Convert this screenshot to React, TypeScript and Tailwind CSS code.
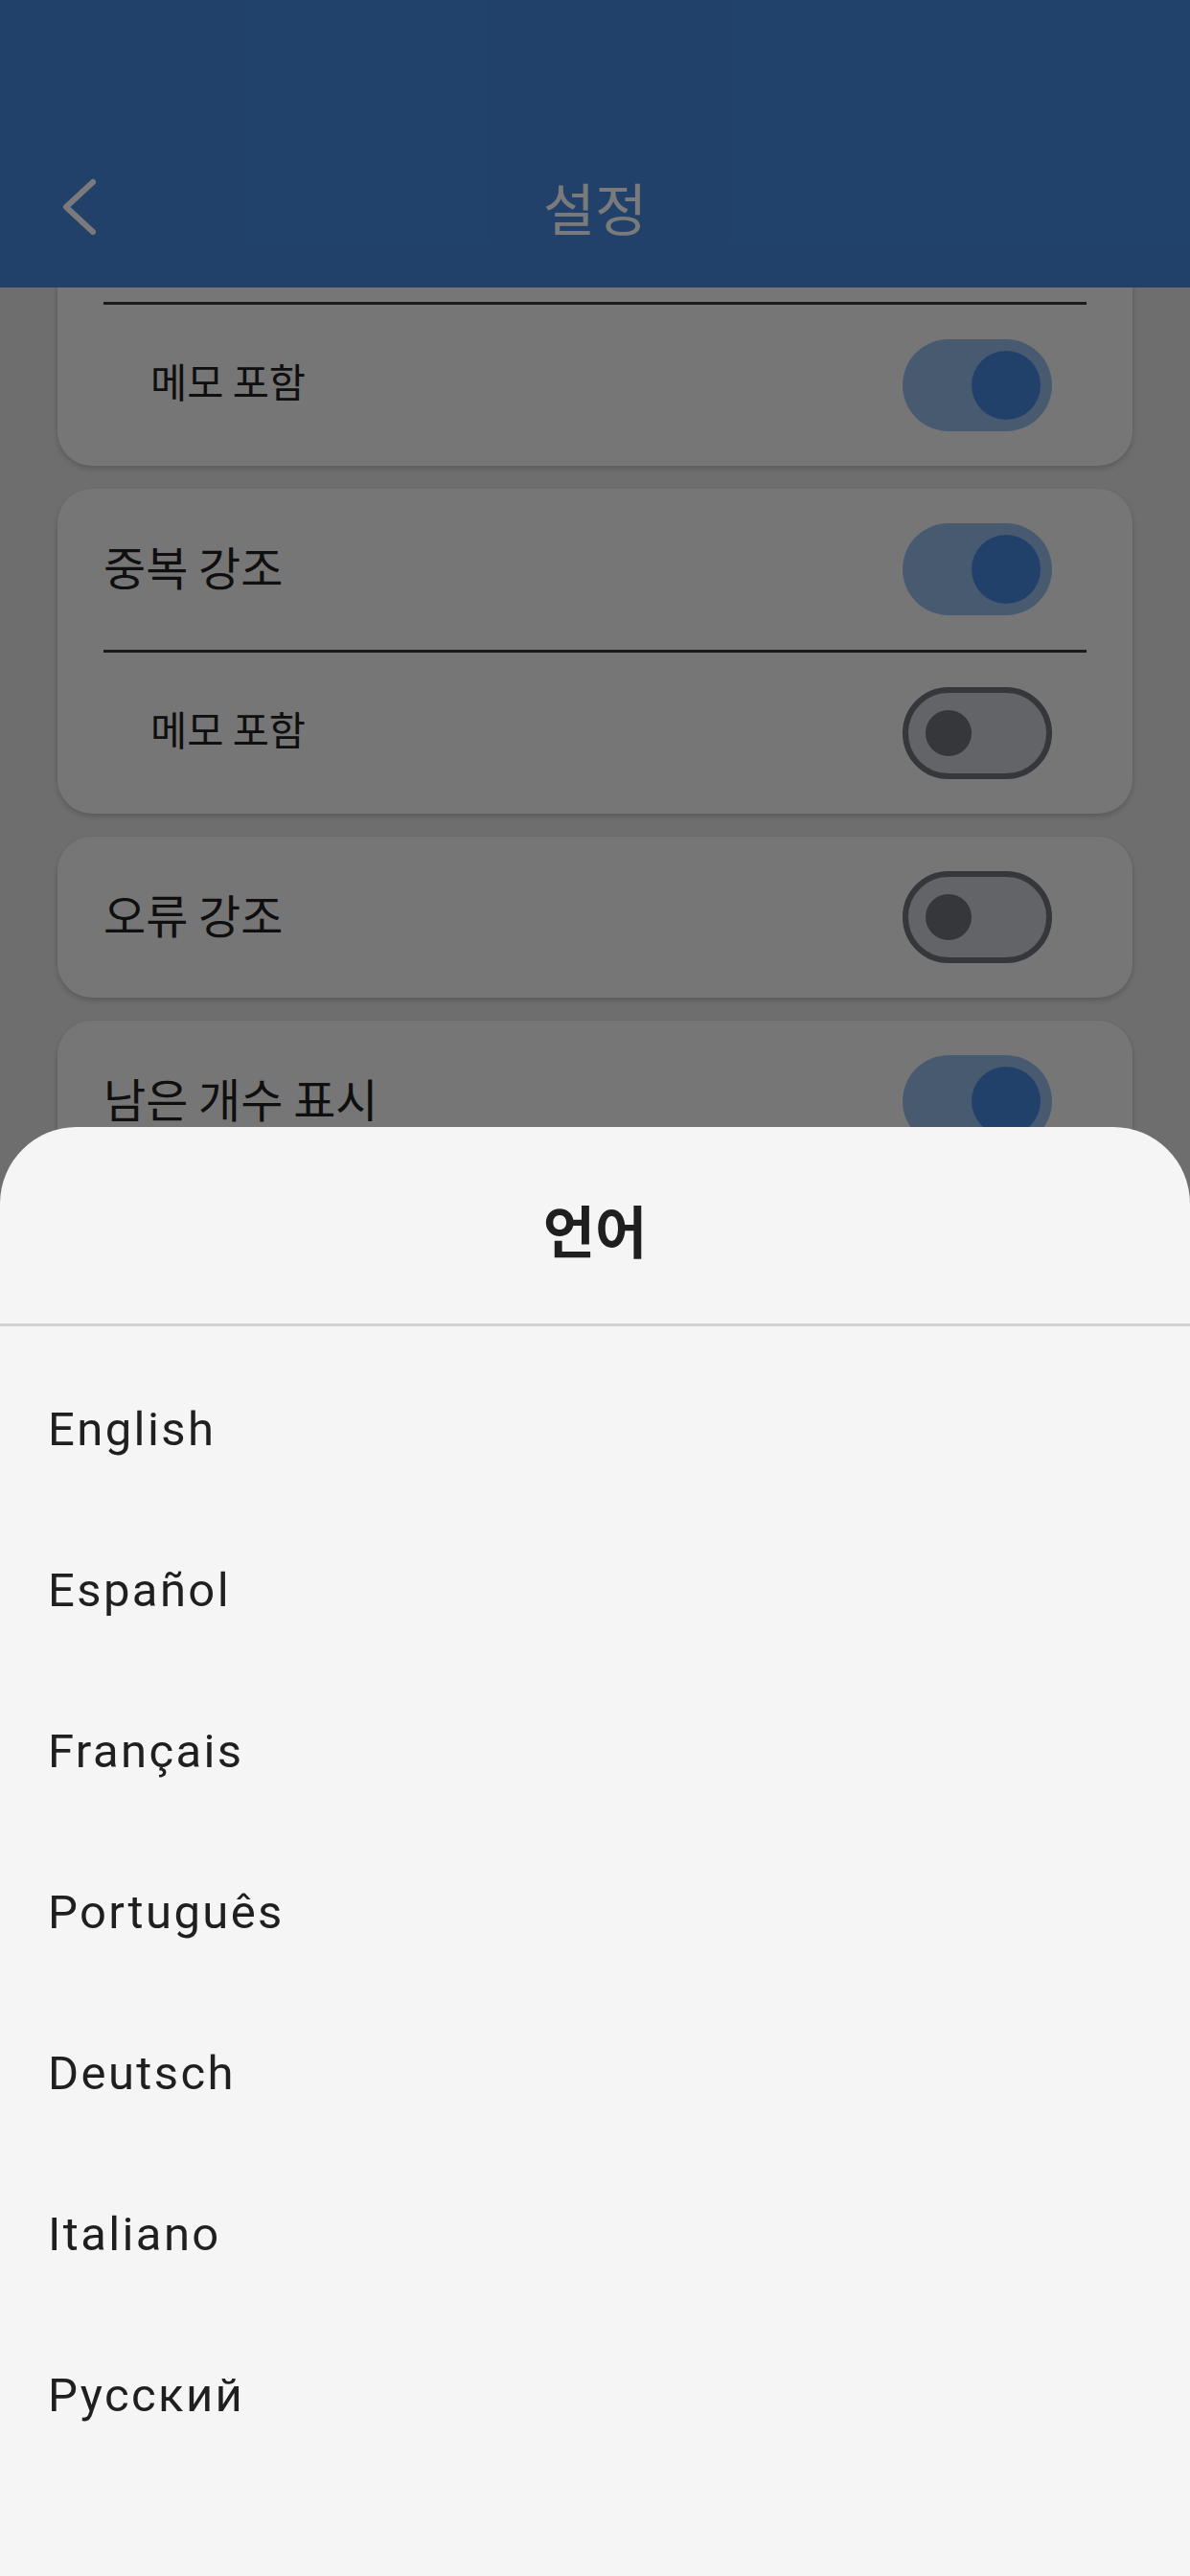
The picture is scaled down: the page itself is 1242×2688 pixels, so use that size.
import React from 'react';

const ko = { fontFamily: '"Noto Sans CJK KR", "Noto Sans", sans-serif' };
const latin = { fontFamily: 'Roboto, "Noto Sans", sans-serif' };

function Toggle({ on }: { on: boolean }) {
  if (on) {
    return (
      <div className="w-[156px] h-[96px] rounded-full bg-[#94bce9] flex items-center justify-end pr-[12px] shrink-0">
        <div className="w-[72px] h-[72px] rounded-full bg-[#4589dd]" />
      </div>
    );
  }
  return (
    <div className="w-[156px] h-[96px] rounded-full bg-[#ced2d9] border-[6px] border-[#717379] flex items-center pl-[18px] shrink-0">
      <div className="w-[48px] h-[48px] rounded-full bg-[#717379]" />
    </div>
  );
}

function Row({ label, on, sub }: { label: string; on: boolean; sub?: boolean }) {
  return (
    <div className={`h-[168px] flex items-center justify-between pr-[84px] ${sub ? 'pl-[97px]' : 'pl-[48px]'}`}>
      <span
        style={ko}
        className={`text-[#202020] leading-none pb-[8px] ${sub ? 'text-[41.5px]' : 'text-[48px]'}`}
      >
        {label}
      </span>
      <Toggle on={on} />
    </div>
  );
}

function Card({ children }: { children: React.ReactNode }) {
  return (
    <div className="bg-[#f6f6f6] rounded-[36px] shadow-[0_3px_6px_rgba(0,0,0,0.18)] flex flex-col">
      {children}
    </div>
  );
}

const Divider = () => <div className="mx-[48px] h-[3px] bg-[#3a3a3a]" />;

const languages = ['English', 'Español', 'Français', 'Português', 'Deutsch', 'Italiano', 'Русский'];

export default function App() {
  return (
    <div className="relative w-[1242px] h-[2688px] overflow-hidden bg-[#e6e6e6]">
      {/* app bar */}
      <div className="h-[300px] bg-[#4589dd] flex flex-col justify-end relative z-10">
        <div className="h-[168px] flex items-center">
          <div className="w-[150px] pl-[55px] flex items-center">
            <svg width="48" height="72" viewBox="0 0 48 72" fill="none">
              <path d="M42 10 L14 36 L42 62" stroke="#ffffff" strokeWidth="6" strokeLinecap="round" strokeLinejoin="round" />
            </svg>
          </div>
          <div className="flex-1 text-center">
            <span style={ko} className="text-white text-[59px] leading-none">설정</span>
          </div>
          <div className="w-[150px]" />
        </div>
      </div>

      {/* settings list, scrolled under the app bar */}
      <div className="h-[2388px] overflow-hidden">
        <div className="-mt-[153px] px-[60px] flex flex-col gap-[24px]">
          <Card>
            <div className="h-[168px]" />
            <Divider />
            <Row label="메모 포함" on sub />
          </Card>
          <Card>
            <Row label="중복 강조" on />
            <Divider />
            <Row label="메모 포함" on={false} sub />
          </Card>
          <Card>
            <Row label="오류 강조" on={false} />
          </Card>
          <Card>
            <Row label="남은 개수 표시" on />
          </Card>
          <Card>
            <Row label="자동 메모 제거" on />
          </Card>
        </div>
      </div>

      {/* scrim */}
      <div className="absolute inset-0 bg-black/[0.52] z-20" />

      {/* language sheet */}
      <div className="absolute left-0 right-0 top-[1176px] bottom-0 z-30 bg-[#f5f5f5] rounded-t-[80px] flex flex-col">
        <div className="h-[205px] flex items-center justify-center pt-[8px]">
          <span style={ko} className="text-[#1f1f1f] text-[59px] font-semibold leading-none">언어</span>
        </div>
        <div className="h-[3px] bg-[#d0d1d6]" />
        <div className="pt-[24px] flex flex-col">
          {languages.map((lang) => (
            <div key={lang} className="h-[168px] flex items-center pl-[50px]">
              <span style={latin} className="text-[49px] tracking-[2.4px] text-[#1f1f1f]">
                {lang}
              </span>
            </div>
          ))}
        </div>
      </div>
    </div>
  );
}
